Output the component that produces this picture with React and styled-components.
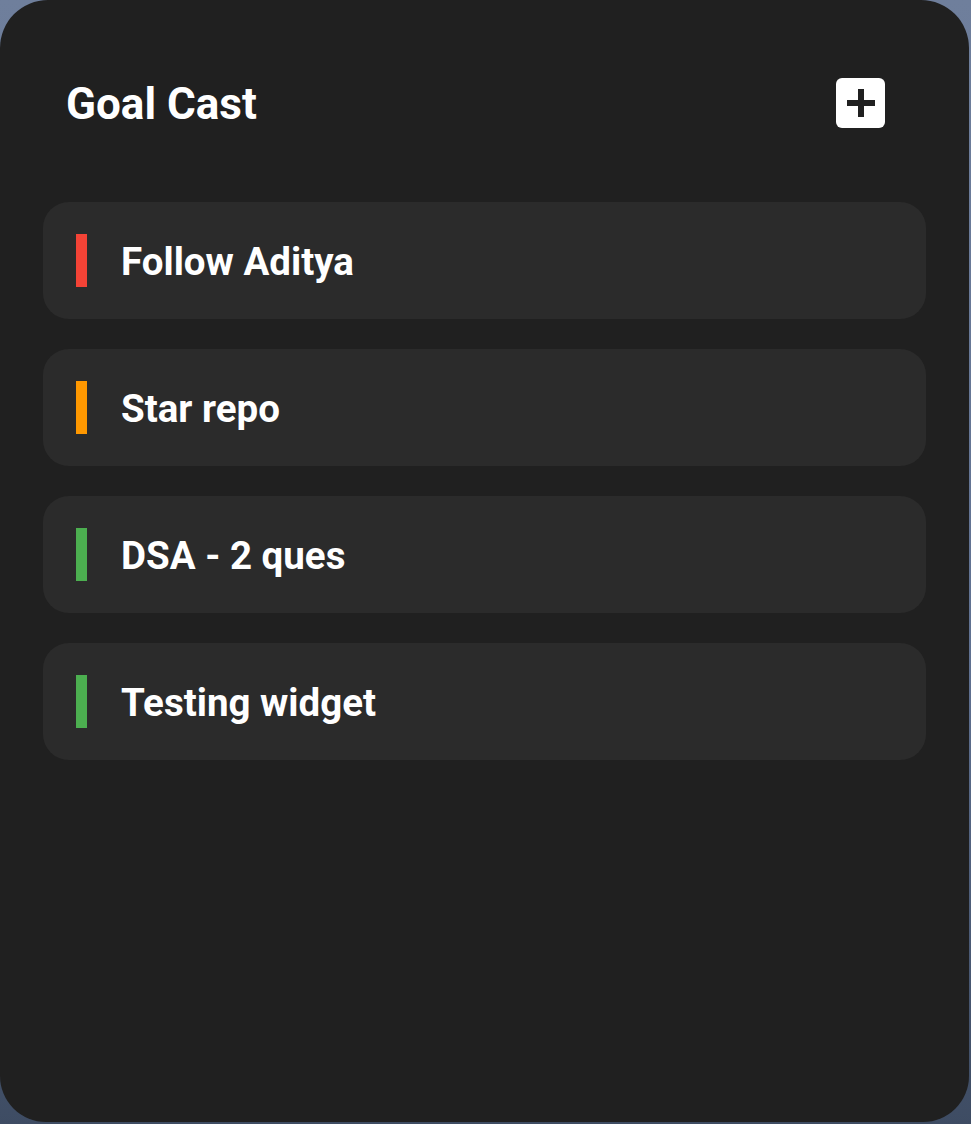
import React from "react";
import styled, { createGlobalStyle } from "styled-components";

const Global = createGlobalStyle`
  html, body { margin: 0; padding: 0; }
  body {
    background: linear-gradient(180deg, #6f7f9c 0%, #5f7090 60%, #3e4c63 100%);
    font-family: Roboto, "Noto Sans", Arial, sans-serif;
    width: 971px;
    height: 1124px;
    overflow: hidden;
  }
`;

const Widget = styled.div`
  width: 969px;
  height: 1122px;
  box-sizing: border-box;
  background: #202020;
  border-radius: 48px 48px 46px 46px;
  padding: 78px 43px 0 43px;
  display: flex;
  flex-direction: column;
`;

const Header = styled.div`
  display: flex;
  align-items: center;
  justify-content: space-between;
  height: 50px;
  padding: 0 41px 0 23px;
  margin-bottom: 74px;
`;

const Title = styled.h1`
  margin: 0;
  font-size: 44px;
  line-height: 50px;
  font-weight: 700;
  color: #ffffff;
  position: relative;
  top: 1px;
`;

const AddButton = styled.button`
  width: 49px;
  height: 50px;
  border: none;
  border-radius: 6px;
  background: #ffffff;
  padding: 0;
  display: flex;
  align-items: center;
  justify-content: center;
  cursor: pointer;
`;

const List = styled.div`
  display: flex;
  flex-direction: column;
  gap: 30px;
`;

const Card = styled.div`
  height: 117px;
  box-sizing: border-box;
  background: #2b2b2b;
  border-radius: 26px;
  display: flex;
  align-items: center;
  padding-left: 33px;
  gap: 34px;
`;

const Bar = styled.span`
  width: 11px;
  height: 53px;
  background: ${(p) => p.$color};
  flex-shrink: 0;
`;

const Label = styled.span`
  font-size: 38.5px;
  line-height: 1;
  font-weight: 700;
  color: #ffffff;
  padding-top: 4px;
`;

const goals = [
  { text: "Follow Aditya", color: "#f44336" },
  { text: "Star repo", color: "#ff9800" },
  { text: "DSA - 2 ques", color: "#4caf50" },
  { text: "Testing widget", color: "#4caf50" },
];

export default function App() {
  return (
    <>
      <Global />
      <Widget>
        <Header>
          <Title>Goal Cast</Title>
          <AddButton aria-label="Add goal">
            <svg width="28" height="28" viewBox="0 0 28 28">
              <rect x="0" y="11" width="28" height="6" fill="#202020" />
              <rect x="11" y="0" width="6" height="28" fill="#202020" />
            </svg>
          </AddButton>
        </Header>
        <List>
          {goals.map((g) => (
            <Card key={g.text}>
              <Bar $color={g.color} />
              <Label>{g.text}</Label>
            </Card>
          ))}
        </List>
      </Widget>
    </>
  );
}
